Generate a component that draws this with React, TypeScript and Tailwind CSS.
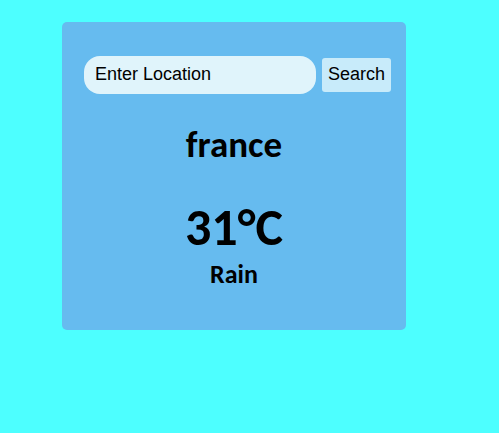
import React from "react";

export default function App() {
  return (
    <div className="min-h-screen w-full bg-[#4dffff] pt-[22px] pl-[62px]">
      <div className="w-[344px] h-[308px] rounded-[5px] bg-[#66bbef] pt-[34px] flex flex-col">
        <div className="flex items-center gap-[6px] h-[38px] pl-[22px]">
          <input
            type="text"
            placeholder="Enter Location"
            className="w-[232px] h-[38px] rounded-[16px] bg-[#e0f4fb] px-[11px] pb-[2px] text-[18px] text-black placeholder:text-black outline-none font-['Liberation_Sans',Arial,sans-serif]"
          />
          <button className="w-[69px] h-[34px] pb-[2px] rounded-[3px] bg-[#c8ebfa] text-[18px] text-black font-['Liberation_Sans',Arial,sans-serif]">
            Search
          </button>
        </div>
        <div className="flex flex-col items-center font-['Carlito','Lato',sans-serif] font-bold text-black">
          <div className="text-[37px] leading-[37px] mt-[32px]">france</div>
          <div className="text-[52px] leading-[52px] mt-[38px]">31°C</div>
          <div className="text-[26px] leading-[26px] mt-[8px]">Rain</div>
        </div>
      </div>
    </div>
  );
}
